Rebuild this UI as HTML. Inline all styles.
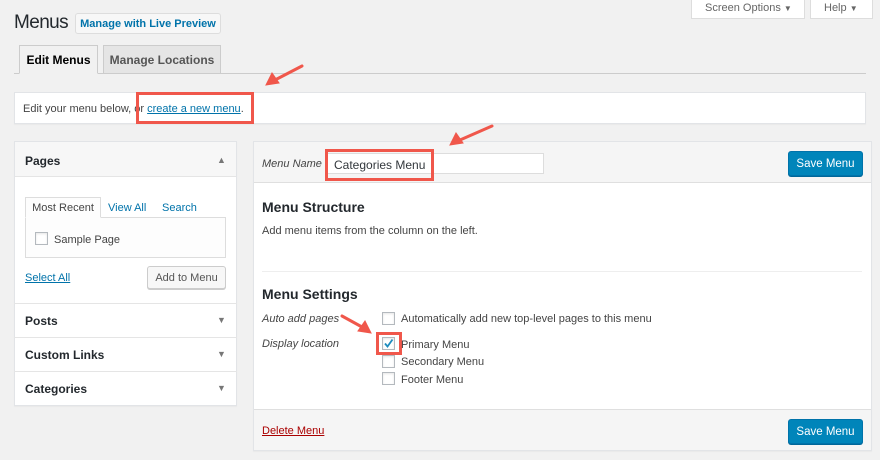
<!DOCTYPE html>
<html><head><meta charset="utf-8"><style>
*{box-sizing:border-box;margin:0;padding:0}
body{width:880px;height:460px;background:#f1f1f1;font-family:"Liberation Sans",Arial,sans-serif;font-size:11px;color:#23282d;position:relative;overflow:hidden}
.a{position:absolute}
.box{background:#fff;border:1px solid #e2e4e7;box-shadow:0 1px 1px rgba(0,0,0,.04)}
.btn{position:absolute;background:#f7f7f7;border:1px solid #ccc;border-radius:3px;color:#555;font-size:11px;text-align:center;box-shadow:0 1px 0 #ccc}
.pri{position:absolute;background:#0085ba;border:1px solid #0073aa;border-radius:3px;color:#fff;font-size:11.5px;text-align:center;box-shadow:0 1px 0 #006799}
.cb{position:absolute;width:13px;height:13px;border:1px solid #b4b9be;background:#fff;box-shadow:inset 0 1px 2px rgba(0,0,0,.1)}
.red{position:absolute;border:3px solid #f0574b}
.lnk{color:#0073aa;text-decoration:underline}
.tri{position:absolute;color:#777;font-size:9px}
.sec{position:absolute;left:14px;width:223px;border-top:1px solid #e5e5e5;font-weight:bold;font-size:12px;padding-left:11px}
</style></head><body>
<div class="a" style="left:14px;top:12px;font-size:19px;letter-spacing:-0.6px;color:#23282d">Menus</div>
<div class="btn" style="left:75px;top:13px;width:146px;height:21px;line-height:20px;background:#f7f7f7;color:#0073aa;font-weight:bold;box-shadow:none;border-color:#ddd">Manage with Live Preview</div>
<div class="a" style="left:691px;top:-2px;width:114px;height:21px;background:#fff;border:1px solid #ddd;border-top:0;color:#666;line-height:21px;padding-left:13px;font-size:11px">Screen Options <span style="font-size:8px">▼</span></div>
<div class="a" style="left:810px;top:-2px;width:63px;height:21px;background:#fff;border:1px solid #ddd;border-top:0;color:#666;line-height:21px;padding-left:13px;font-size:11px">Help <span style="font-size:8px">▼</span></div>
<div class="a" style="left:14px;top:73px;width:852px;border-top:1px solid #ccc"></div>
<div class="a" style="left:19px;top:45px;width:79px;height:29px;background:#f1f1f1;border:1px solid #ccc;border-bottom:1px solid #f1f1f1;font-weight:bold;font-size:12px;line-height:28px;text-align:center;color:#000">Edit Menus</div>
<div class="a" style="left:103px;top:45px;width:118px;height:29px;background:#e5e5e5;border:1px solid #ccc;font-weight:bold;font-size:12px;line-height:28px;text-align:center;color:#555">Manage Locations</div>
<div class="a box" style="left:14px;top:92px;width:852px;height:32px;padding:10px 8px;color:#444">Edit your menu below, or <span class="lnk">create a new menu</span>.</div>
<div class="red" style="left:136px;top:92px;width:118px;height:32px"></div>
<div class="a box" style="left:14px;top:141px;width:223px;height:265px"></div>
<div class="a" style="left:15px;top:142px;width:221px;height:35px;background:#f7f7f7;border-bottom:1px solid #e5e5e5;font-weight:bold;font-size:12px;padding:12px 10px">Pages</div>
<div class="tri" style="left:217px;top:155px">▲</div>
<div class="a" style="left:25px;top:217px;width:201px;height:41px;border:1px solid #ddd;background:#fdfdfd"></div>
<div class="a" style="left:25px;top:197px;width:76px;height:21px;border:1px solid #ddd;border-bottom:1px solid #fdfdfd;background:#fdfdfd;line-height:21px;text-align:center;color:#444">Most Recent</div>
<div class="a" style="left:108px;top:202px;color:#0073aa">View All</div>
<div class="a" style="left:162px;top:202px;color:#0073aa">Search</div>
<div class="cb" style="left:35px;top:232px"></div>
<div class="a" style="left:54px;top:234px;color:#444">Sample Page</div>
<div class="a lnk" style="left:25px;top:272px">Select All</div>
<div class="btn" style="left:147px;top:266px;width:79px;height:23px;line-height:22px">Add to Menu</div>
<div class="sec" style="top:303px;height:34px;line-height:34px">Posts</div><div class="tri" style="left:217px;top:315px">▼</div>
<div class="sec" style="top:337px;height:34px;line-height:34px">Custom Links</div><div class="tri" style="left:217px;top:349px">▼</div>
<div class="sec" style="top:371px;height:34px;line-height:34px">Categories</div><div class="tri" style="left:217px;top:383px">▼</div>
<div class="a box" style="left:253px;top:141px;width:619px;height:310px"></div>
<div class="a" style="left:254px;top:142px;width:617px;height:41px;background:#f5f5f5;border-bottom:1px solid #dfdfdf"></div>
<div class="a" style="left:262px;top:158px;font-style:italic;color:#444">Menu Name</div>
<div class="a" style="left:326px;top:153px;width:218px;height:21px;background:#fff;border:1px solid #ddd;padding:4px 7px;font-size:12px;color:#32373c">Categories Menu</div>
<div class="red" style="left:325px;top:149px;width:109px;height:32px"></div>
<div class="pri" style="left:788px;top:151px;width:75px;height:25px;line-height:24px">Save Menu</div>
<div class="a" style="left:262px;top:199px;font-weight:bold;font-size:14px">Menu Structure</div>
<div class="a" style="left:262px;top:225px;color:#444">Add menu items from the column on the left.</div>
<div class="a" style="left:262px;top:271px;width:600px;border-top:1px solid #eee"></div>
<div class="a" style="left:262px;top:286px;font-weight:bold;font-size:14px">Menu Settings</div>
<div class="a" style="left:262px;top:313px;font-style:italic;color:#444">Auto add pages</div>
<div class="cb" style="left:382px;top:312px"></div>
<div class="a" style="left:401px;top:313px;color:#444">Automatically add new top-level pages to this menu</div>
<div class="a" style="left:262px;top:338px;font-style:italic;color:#444">Display location</div>
<div class="cb" style="left:382px;top:337px"></div>
<svg class="a" style="left:382px;top:337px" width="13" height="13"><path d="M3 6.5 L5.5 9.5 L10.5 2.5" stroke="#1e8cbe" stroke-width="1.8" fill="none"/></svg>
<div class="red" style="left:376px;top:332px;width:26px;height:23px"></div>
<div class="a" style="left:401px;top:339px;color:#444">Primary Menu</div>
<div class="cb" style="left:382px;top:355px"></div>
<div class="a" style="left:401px;top:356px;color:#444">Secondary Menu</div>
<div class="cb" style="left:382px;top:372px"></div>
<div class="a" style="left:401px;top:374px;color:#444">Footer Menu</div>
<div class="a" style="left:254px;top:409px;width:617px;height:41px;background:#f5f5f5;border-top:1px solid #dfdfdf"></div>
<div class="a" style="left:262px;top:425px;color:#a00;text-decoration:underline">Delete Menu</div>
<div class="pri" style="left:788px;top:419px;width:75px;height:25px;line-height:24px">Save Menu</div>
<svg class="a" style="left:0;top:0" width="880" height="460">
<g stroke="#f0574b" stroke-width="3" fill="#f0574b" stroke-linecap="round">
<line x1="302" y1="66" x2="275" y2="80"/><polygon points="266,85 272,73 279,83" stroke-width="1"/>
<line x1="492" y1="126" x2="460" y2="140"/><polygon points="450,145 456,133 463,143" stroke-width="1"/>
<line x1="342" y1="316" x2="362" y2="327"/><polygon points="371,333 358,331 365,321" stroke-width="1"/>
</g></svg>
</body></html>
